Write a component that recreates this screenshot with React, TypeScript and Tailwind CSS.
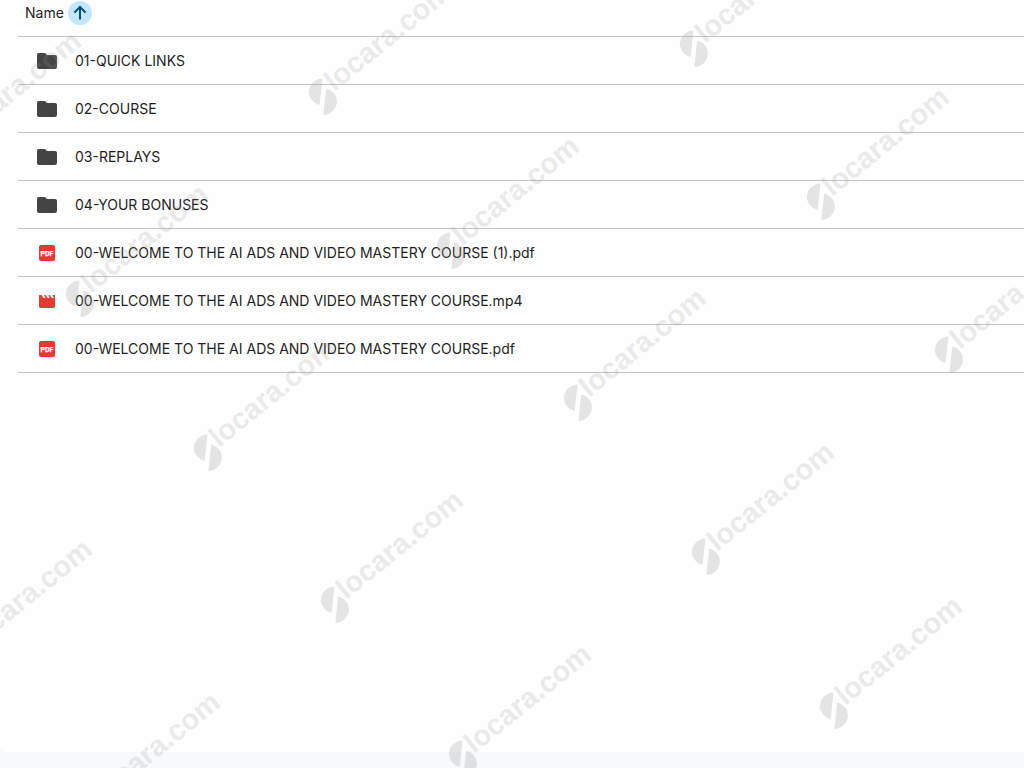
import React from "react";

type Kind = "folder" | "pdf" | "video";

const files: { name: string; kind: Kind }[] = [
  { name: "01-QUICK LINKS", kind: "folder" },
  { name: "02-COURSE", kind: "folder" },
  { name: "03-REPLAYS", kind: "folder" },
  { name: "04-YOUR BONUSES", kind: "folder" },
  { name: "00-WELCOME TO THE AI ADS AND VIDEO MASTERY COURSE (1).pdf", kind: "pdf" },
  { name: "00-WELCOME TO THE AI ADS AND VIDEO MASTERY COURSE.mp4", kind: "video" },
  { name: "00-WELCOME TO THE AI ADS AND VIDEO MASTERY COURSE.pdf", kind: "pdf" },
];

const marks: [number, number][] = [
  [-47, 144], [323, 95], [694, 47], [821, 200], [451, 249], [80, 297], [949, 353], [578, 401],
  [208, 451], [335, 603], [706, 555], [834, 709], [463, 757], [-36, 652], [92, 805],
];

function FileIcon({ kind }: { kind: Kind }) {
  if (kind === "folder") {
    return (
      <svg aria-hidden="true" viewBox="0 0 24 24" className="block size-6 fill-[#444444]">
        <path d="M4 4h5.200c.5 0 1 .2 1.400.6L12 6h8a2 2 0 0 1 2 2v10a2 2 0 0 1-2 2H4a2 2 0 0 1-2-2V6a2 2 0 0 1 2-2z" />
      </svg>
    );
  }
  if (kind === "video") {
    return (
      <svg aria-hidden="true" viewBox="0 0 24 24" className="block size-6">
        <path fill="#e53a31" d="M4 6H20v11.200a1.800 1.800 0 0 1-1.800 1.800H5.800A1.800 1.800 0 0 1 4 17.200z" />
        <path
          fill="#fff"
          d="M6 5.500h2.900l1.300 2.800c.5 1.100-1.500 1.400-2.100.2zM10.200 5.500h2.900l1.300 2.800c.5 1.100-1.500 1.400-2.100.2zM14.400 5.500h2.900l1.300 2.800c.5 1.100-1.500 1.400-2.100.2z"
        />
      </svg>
    );
  }
  return (
    <svg aria-hidden="true" viewBox="0 0 24 24" className="block size-6">
      <rect x="4" y="4" width="16" height="16" rx="2" fill="#e53a31" />
      <text
        x="12"
        y="14.500"
        textAnchor="middle"
        fill="#fff"
        stroke="#fff"
        strokeWidth=".25"
        className="font-['Roboto',sans-serif] text-[7px] font-bold"
      >
        PDF
      </text>
    </svg>
  );
}

function Watermarks() {
  return (
    <svg aria-hidden="true" className="pointer-events-none absolute inset-0 h-full w-full fill-[#999999] opacity-25">
      {marks.map(([x, y]) => (
        <g key={`${x}:${y}`} transform={`translate(${x} ${y})`}>
          <path d="M-.5-16.500A14.500 13.500 0 0 0-3.400 10Z" />
          <path d="M3.200-6.500A14.500 13.500 0 0 1 .4 20Z" />
          <text
            x="0"
            y="0"
            transform="translate(11 -3) rotate(-39)"
            fillOpacity=".75"
            className="font-['Liberation_Sans',sans-serif] text-[29px] font-bold"
          >
            locara.com
          </text>
        </g>
      ))}
    </svg>
  );
}

export default function App() {
  return (
    <div className="relative flex min-h-screen flex-col overflow-hidden bg-[#f7f9fc] pb-4 font-['Inter',sans-serif] text-sm text-[#1f1f1f]">
      <main className="flex-1 rounded-bl-lg bg-[#fefefe] pl-[18px]">
        <table className="w-full border-collapse text-left">
          <thead>
            <tr className="border-b border-[#c4c4c4]">
              <th scope="col" className="h-9 p-0 pb-[11px] pl-[7px] align-bottom font-normal">
                <button type="button" className="flex items-center gap-1">
                  Name
                  <span className="flex size-6 items-center justify-center rounded-full bg-[#c2e7ff]">
                    <svg aria-hidden="true" viewBox="0 0 24 24" className="size-[18px] fill-none stroke-[#004a77] stroke-[2.600]">
                      <path d="M12 20.500V4M4.500 11.500L12 4l7.500 7.500" />
                    </svg>
                  </span>
                </button>
              </th>
            </tr>
          </thead>
          <tbody>
            {files.map((file) => (
              <tr key={file.name} className="border-b border-[#c4c4c4]">
                <td className="h-12 p-0 pt-px pl-[17px]">
                  <div className="flex items-center gap-4">
                    <FileIcon kind={file.kind} />
                    <span>{file.name}</span>
                  </div>
                </td>
              </tr>
            ))}
          </tbody>
        </table>
      </main>
      <Watermarks />
    </div>
  );
}
